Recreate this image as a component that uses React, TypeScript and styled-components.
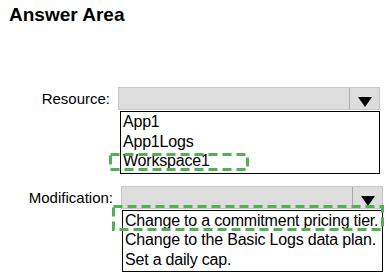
import styled, { createGlobalStyle } from 'styled-components';

const GlobalStyle = createGlobalStyle`
	html, body {
		margin: 0;
		padding: 0;
		background: #ffffff;
	}
	body {
		font-family: 'Liberation Sans', Arial, sans-serif;
		color: #000000;
	}
`;

const Page = styled.div`
	width: 389px;
	height: 278px;
	overflow: hidden;
	background: #ffffff;
`;

const Title = styled.h1`
	margin: 0;
	padding: 4px 0 0 9px;
	font-size: 19px;
	line-height: 22px;
	font-weight: 700;
`;

const Form = styled.div`
	display: flex;
	flex-direction: column;
	gap: 12px;
	margin-top: 61px;
`;

const Field = styled.div`
	display: flex;
	align-items: flex-start;
`;

const Label = styled.div<{ $width: number }>`
	width: ${(p) => p.$width}px;
	margin-right: 8px;
	text-align: right;
	font-size: 15px;
	line-height: 23px;
	flex-shrink: 0;
`;

const Control = styled.div`
	display: flex;
	flex-direction: column;
	width: 262px;
`;

const SelectBar = styled.div`
	display: flex;
	height: 23px;
	box-sizing: border-box;
	background: #dddddd;
	border: 1px solid #c6c6c6;
`;

const SelectValue = styled.div`
	flex: 1;
`;

const ArrowButton = styled.div`
	width: 30px;
	border-left: 1px solid #a9a9a9;
	display: flex;
	justify-content: center;
	padding-top: 9px;
	box-sizing: border-box;
`;

const Arrow = styled.div`
	width: 0;
	height: 0;
	border-left: 7.5px solid transparent;
	border-right: 7.5px solid transparent;
	border-top: 10px solid #000000;
`;

const List = styled.div<{ $offset: number }>`
	margin-top: 1px;
	margin-left: ${(p) => p.$offset}px;
	border: 1px solid #000000;
	background: #ffffff;
	padding-bottom: 2px;
`;

const Item = styled.div`
	position: relative;
	padding-left: 2px;
	font-size: 16px;
	line-height: 19.5px;
	letter-spacing: -0.2px;
	white-space: nowrap;
`;

const DashBox = styled.svg<{ $x: number; $y: number }>`
	position: absolute;
	left: ${(p) => p.$x}px;
	top: ${(p) => p.$y}px;
	overflow: visible;
	pointer-events: none;
`;

type Box = [number, number, number, number];

function Highlight({ box }: { box: Box }) {
	const [x, y, w, h] = box;
	return (
		<DashBox $x={x} $y={y} width={w} height={h}>
			<rect
				x={1.5}
				y={1.5}
				width={w - 3}
				height={h - 3}
				fill='none'
				stroke='#52b052'
				strokeWidth={3}
				strokeDasharray='9 5'
			/>
		</DashBox>
	);
}

type DropdownProps = {
	label: string;
	labelWidth: number;
	listOffset: number;
	options: string[];
	answer: number;
	highlight: Box;
};

function Dropdown({ label, labelWidth, listOffset, options, answer, highlight }: DropdownProps) {
	return (
		<Field>
			<Label $width={labelWidth}>{label}</Label>
			<Control>
				<SelectBar>
					<SelectValue />
					<ArrowButton>
						<Arrow />
					</ArrowButton>
				</SelectBar>
				<List $offset={listOffset}>
					{options.map((o, i) => (
						<Item key={o}>
							{o}
							{i === answer && <Highlight box={highlight} />}
						</Item>
					))}
				</List>
			</Control>
		</Field>
	);
}

export default function App() {
	return (
		<Page>
			<GlobalStyle />
			<Title>Answer Area</Title>
			<Form>
				<Dropdown
					label='Resource:'
					labelWidth={110}
					listOffset={2}
					options={['App1', 'App1Logs', 'Workspace1']}
					answer={2}
					highlight={[-12, 2, 140, 18]}
				/>
				<Dropdown
					label='Modification:'
					labelWidth={113}
					listOffset={1}
					options={[
						'Change to a commitment pricing tier.',
						'Change to the Basic Logs data plan.',
						'Set a daily cap.',
					]}
					answer={0}
					highlight={[-11, -6, 272, 26]}
				/>
			</Form>
		</Page>
	);
}
